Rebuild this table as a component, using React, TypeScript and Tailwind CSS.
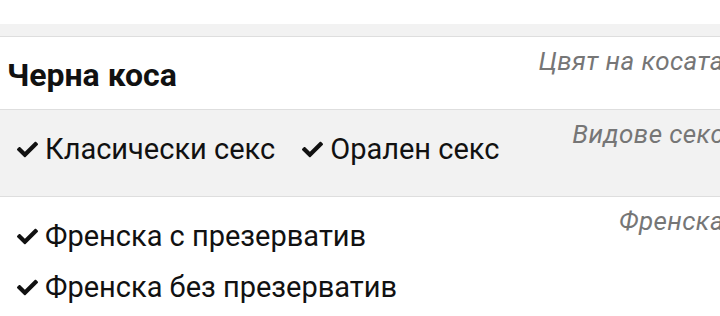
import React from "react";
import { FaCheck } from "react-icons/fa";

const Item = ({ text }: { text: string }) => (
  <div className="flex items-center gap-[7px]">
    <FaCheck className="w-[21px] h-[21px] text-[#111]" />
    <span>{text}</span>
  </div>
);

const Label = ({ text }: { text: string }) => (
  <div className="pt-[9px] text-[26px] tracking-[0.4px] italic text-[#767676] leading-[30px] whitespace-nowrap">
    {text}
  </div>
);

const App = () => {
  return (
    <div className="w-[720px] h-[316px] overflow-hidden bg-white font-['Roboto',sans-serif] text-[#111]">
      <div className="h-6 bg-white" />
      <div className="h-[13px] bg-[#f2f2f2] border-b border-[#dedede]" />

      <div className="w-[724px] h-[73px] flex items-start justify-between border-b border-[#dedede] bg-white">
        <div className="pl-[7px] pt-[20px] text-[32px] font-bold leading-[36px]">Черна коса</div>
        <Label text="Цвят на косата" />
      </div>

      <div className="w-[724px] h-[87px] flex items-start justify-between border-b border-[#dedede] bg-[#f2f2f2]">
        <div className="pl-[17px] pt-[21px] text-[29px] leading-[36px] flex items-start gap-[27px]">
          <Item text="Класически секс" />
          <Item text="Орален секс" />
        </div>
        <Label text="Видове секс" />
      </div>

      <div className="w-[724px] flex items-start justify-between bg-white">
        <div className="pl-[17px] pt-[21px] text-[29px] leading-[36px] flex flex-col gap-[15px]">
          <Item text="Френска с презерватив" />
          <Item text="Френска без презерватив" />
        </div>
        <Label text="Френска" />
      </div>
    </div>
  );
};

export default App;
